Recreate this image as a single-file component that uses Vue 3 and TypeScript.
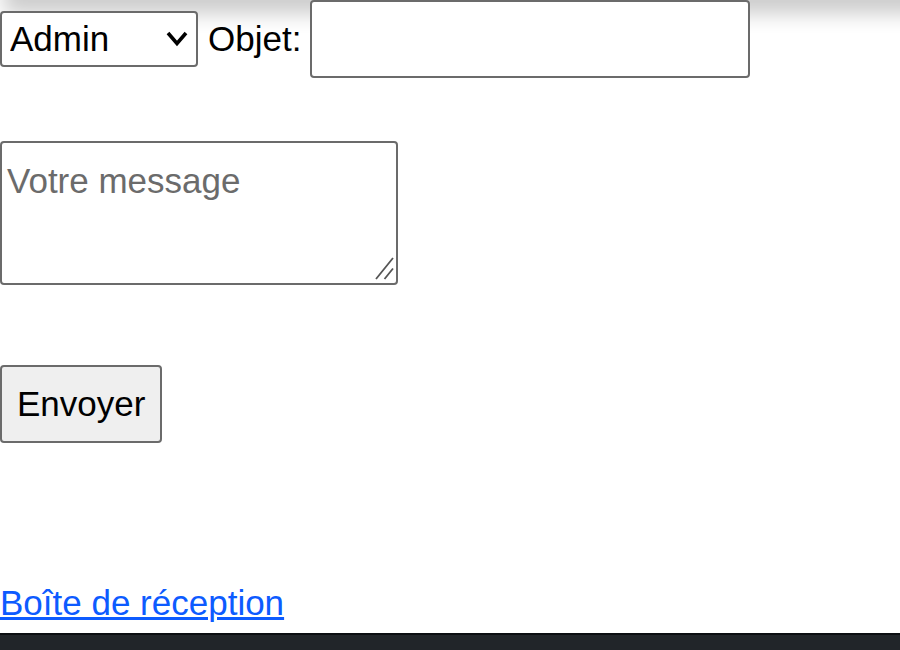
<script setup lang="ts">
import { ref } from 'vue'

const recipients: string[] = ['Admin']
const recipient = ref<string>('Admin')
const subject = ref<string>('')
const message = ref<string>('')
</script>

<template>
  <div class="page">
    <header class="topbar"></header>
    <main class="content">
      <form class="form" @submit.prevent>
        <div class="row">
          <div class="select-box">
            <select v-model="recipient" class="control select" aria-label="Destinataire">
              <option v-for="name in recipients" :key="name" :value="name">{{ name }}</option>
            </select>
            <svg class="chevron" viewBox="0 0 22 16" aria-hidden="true">
              <path d="M2 2 L11 12.5 L20 2" fill="none" stroke="#000" stroke-width="3.6" />
            </svg>
          </div>
          <label class="label" for="subject">Objet:</label>
          <input id="subject" v-model="subject" class="control subject" type="text" />
        </div>
        <div class="message-box">
          <textarea v-model="message" class="control message" placeholder="Votre message" aria-label="Votre message"></textarea>
          <svg class="grip" viewBox="0 0 20 24" aria-hidden="true">
            <path d="M2 22 L19 1 M10.500 22 L19 11.500" fill="none" stroke="#555" stroke-width="1.8" />
          </svg>
        </div>
        <button class="control send" type="submit">Envoyer</button>
      </form>
      <a class="inbox" href="#">Boîte de réception</a>
    </main>
    <footer class="footer"></footer>
  </div>
</template>

<style>
body {
  background: #fff;
}
</style>

<style scoped>
.page {
  display: flex;
  flex-direction: column;
  min-height: 100vh;
  overflow: hidden;
  color: #000;
  font-family: "Liberation Sans", Arial, sans-serif;
  font-size: 35px;
  line-height: 48px;
}

.topbar {
  height: 40px;
  margin: -40px -40px 0 0;
  box-shadow: 4px 14px 20px rgba(0, 0, 0, 0.2);
}

.content {
  position: relative;
}

.control {
  box-sizing: border-box;
  margin: 0;
  border: 2px solid #6b6b6b;
  border-radius: 4px;
  background: #fff;
  color: inherit;
  font: inherit;
  outline: none;
}

.form {
  display: flex;
  flex-direction: column;
  align-items: flex-start;
}

.row {
  display: flex;
  align-items: center;
  width: 100%;
}

.select-box {
  position: relative;
  width: 22%;
}

.select {
  display: block;
  width: 100%;
  height: 56px;
  padding: 0 8px;
  appearance: none;
}

.chevron {
  position: absolute;
  top: 20px;
  right: 10px;
  width: 22px;
  height: 16px;
  pointer-events: none;
}

.label {
  width: 92px;
  margin: 0 10px;
}

.subject {
  width: 440px;
  height: 78px;
  padding: 0 8px;
}

.message-box {
  position: relative;
  margin-top: 63px;
}

.message {
  display: block;
  width: 398px;
  height: 144px;
  padding: 14px 5px;
  resize: none;
}

.message::placeholder {
  color: #6b6b6b;
  opacity: 1;
}

.grip {
  position: absolute;
  right: 4px;
  bottom: 4px;
  width: 20px;
  height: 24px;
  pointer-events: none;
}

.send {
  height: 78px;
  margin-top: 80px;
  padding: 0 15px;
  background: #efefef;
}

.inbox {
  display: inline-block;
  margin-top: 136px;
  color: #0d5bff;
  text-decoration-thickness: 3px;
}

.footer {
  flex: 1;
  min-height: 15px;
  margin-top: 6px;
  border-top: 2px solid #0c0f12;
  background: #212529;
}
</style>
